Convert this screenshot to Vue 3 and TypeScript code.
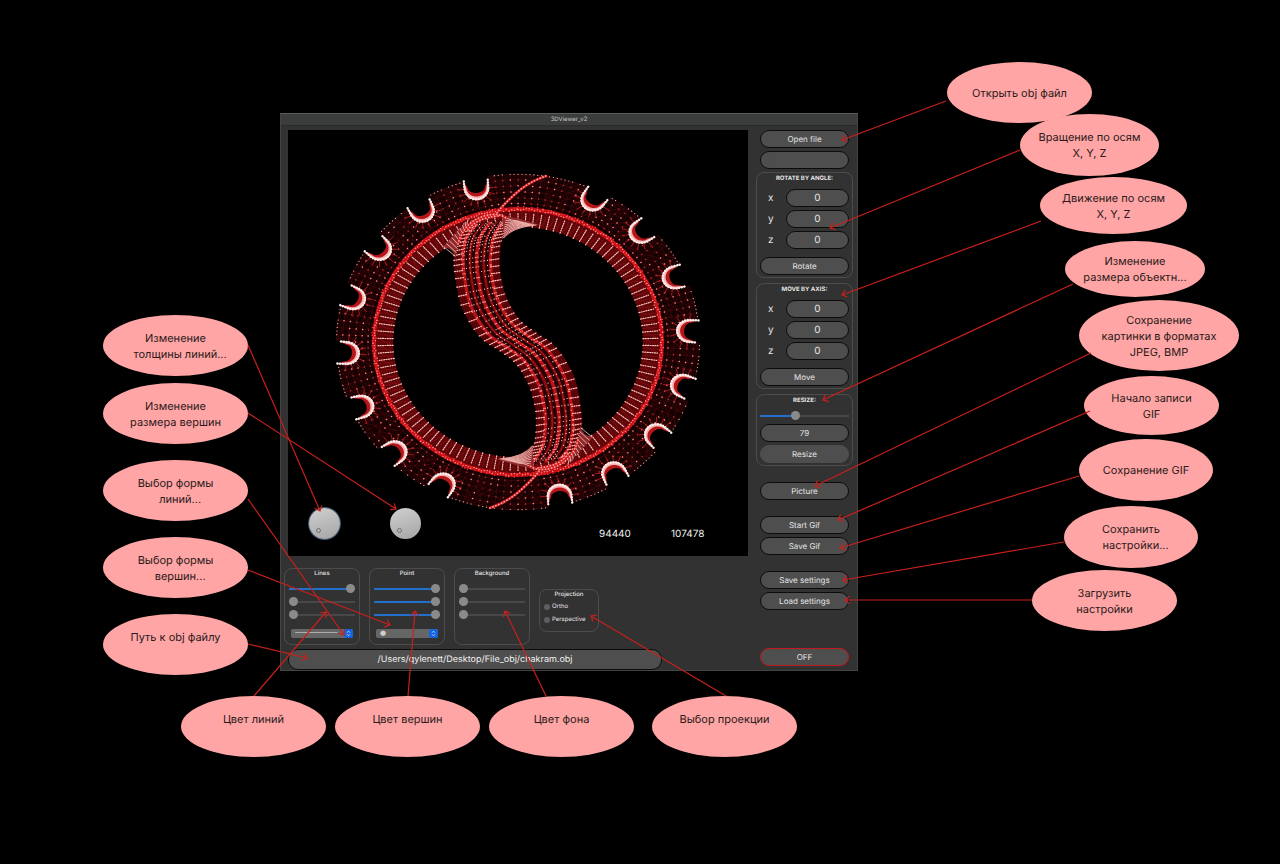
<script setup lang="ts">
import { ref } from 'vue'

interface Bubble {
  x: number
  y: number
  w: number
  h: number
  lines: string[]
  upper?: boolean
}

const bubbles: Bubble[] = [
  { x: 947, y: 62, w: 145, h: 61, lines: ['Открыть obj файл'] },
  { x: 1020, y: 114, w: 139, h: 62, lines: ['Вращение по осям', 'X, Y, Z'] },
  { x: 1040, y: 177, w: 147, h: 57, lines: ['Движение по осям', 'X, Y, Z'] },
  { x: 1065, y: 241, w: 140, h: 56, lines: ['Изменение', 'размера объектн...'] },
  { x: 1079, y: 300, w: 160, h: 71, lines: ['Сохранение', 'картинки в форматах', 'JPEG, BMP'] },
  { x: 1084, y: 376, w: 135, h: 59, lines: ['Начало записи', 'GIF'] },
  { x: 1079, y: 439, w: 134, h: 62, lines: ['Сохранение GIF'] },
  { x: 1064, y: 506, w: 134, h: 62, lines: ['Сохранить', '\u00a0\u00a0\u00a0настройки...'] },
  { x: 1032, y: 570, w: 145, h: 61, lines: ['Загрузить', 'настройки'] },
  { x: 103, y: 315, w: 145, h: 61, lines: ['Изменение', '\u00a0\u00a0\u00a0толщины линий...'] },
  { x: 103, y: 383, w: 145, h: 61, lines: ['Изменение', 'размера вершин'] },
  { x: 103, y: 460, w: 145, h: 61, lines: ['Выбор формы', '\u00a0\u00a0\u00a0линий...'] },
  { x: 103, y: 537, w: 145, h: 61, lines: ['Выбор формы', '\u00a0\u00a0\u00a0вершин...'] },
  { x: 103, y: 614, w: 145, h: 61, lines: ['Путь к obj файлу'], upper: true },
  { x: 181, y: 696, w: 145, h: 61, lines: ['Цвет линий'], upper: true },
  { x: 335, y: 696, w: 145, h: 61, lines: ['Цвет вершин'], upper: true },
  { x: 489, y: 696, w: 145, h: 61, lines: ['Цвет фона'], upper: true },
  { x: 652, y: 696, w: 145, h: 61, lines: ['Выбор проекции'], upper: true },
]

const links: number[][] = [
  [946, 101, 842, 140],
  [1020, 150, 830, 228],
  [1041, 221, 842, 295],
  [1073, 284, 823, 400],
  [1091, 353, 815, 486],
  [1090, 411, 838, 520],
  [1079, 476, 840, 548],
  [1064, 542, 843, 580],
  [1032, 600, 845, 600],
  [248, 345, 320, 511],
  [248, 413, 396, 509],
  [248, 499, 344, 635],
  [248, 570, 390, 625],
  [248, 644, 307, 658],
  [254, 696, 326, 612],
  [408, 696, 415, 611],
  [546, 696, 505, 611],
  [726, 696, 591, 616],
]

function arrow([x1, y1, x2, y2]: number[]): string {
  const a = Math.atan2(y2 - y1, x2 - x1)
  const tip = (d: number) =>
    `${(x2 - 6 * Math.cos(a + d)).toFixed(1)} ${(y2 - 6 * Math.sin(a + d)).toFixed(1)}`
  return `M${x1} ${y1}L${x2} ${y2}M${tip(0.7)}L${x2} ${y2}L${tip(-0.7)}`
}

/* ---- wireframe model, drawn around the origin ---- */
type Pt = [number, number]
const FLAT = 0.924
const f = (n: number) => n.toFixed(1)
const polar = (r: number, deg: number): Pt => {
  const a = (deg * Math.PI) / 180
  return [r * Math.sin(a), -r * Math.cos(a) * FLAT]
}
const P = (p: Pt) => `${f(p[0])} ${f(p[1])}`
const dot = (p: Pt) => `M${P(p)}h.1`

let seed = 7
const rnd = () => {
  seed = (seed * 16807) % 2147483647
  return seed / 2147483647
}

const notchAngles: number[] = []
for (let i = 0; i < 8; i++) notchAngles.push(-14 - i * 20, 166 - i * 20)

let mesh = ''
let meshDots = ''
let brightDots = ''
let edgeDots = ''
const step = 2.5
const rings = [150, 156, 162.5, 169, 175.5, 181.5]
for (let d = 0; d < 360; d += step) {
  mesh += `M${P(polar(146, d))}L${P(polar(181.5, d))}`
  rings.forEach((r, i) => {
    const p = polar(r, d)
    mesh += `M${P(p)}L${P(polar(r, d + step))}`
    const next = rings[i + 1]
    if (next) {
      mesh += rnd() > 0.4 ? `M${P(p)}L${P(polar(next, d + step))}` : `M${P(p)}L${P(polar(next, d - step))}`
    }
    if (i < 5) {
      const k = rnd()
      if (k > 0.55) brightDots += dot(p)
      else if (k > 0.15) meshDots += dot(p)
    }
    if (i === 5) {
      edgeDots += dot(p)
      if (rnd() > 0.4) edgeDots += dot(polar(r, d + step / 2))
    }
  })
}

let rim = ''
let rimFine = ''
for (let d = 0; d < 360; d += 1.1) {
  rim += dot(polar(143.6 + (rnd() - 0.5) * 3.6, d))
  rimFine += dot(polar(144 + (rnd() - 0.5) * 5.5, d))
}

let spokes = ''
let spokeMesh = ''
for (let i = 0; i < 110; i++) {
  const d = (i * 360) / 110
  spokes += `M${P(polar(125, d))}L${P(polar(140, d))}`
  spokeMesh += `M${P(polar(125, d))}L${P(polar(141, d + 3.3))}M${P(polar(125, d + 1.6))}L${P(polar(141, d + 1.6))}`
}

function ring(r: number): string {
  return `M${-r} 0A${r} ${r * FLAT} 0 1 1 ${r} 0A${r} ${r * FLAT} 0 1 1 ${-r} 0Z`
}

/* notch shapes in a local frame: x across, y along the outward radius, leaning clockwise */
function notch(deg: number) {
  const a = (deg * Math.PI) / 180
  const lean = 0.16
  const m = (lx: number, ly: number): Pt => {
    const x = lx * Math.cos(lean) + (ly - 172) * Math.sin(lean)
    const y = 172 - lx * Math.sin(lean) + (ly - 172) * Math.cos(lean)
    return [x * Math.cos(a) + y * Math.sin(a), (x * Math.sin(a) - y * Math.cos(a)) * FLAT]
  }
  const arc = (hw: number, depth: number, c: number, top: number, tipHw: number): Pt[] => {
    const out: Pt[] = [m(-tipHw, top)]
    for (let t = 0; t <= 18; t++) {
      const g = Math.PI + (t / 18) * Math.PI
      out.push(m(hw * Math.cos(g), c + depth * Math.sin(g)))
    }
    out.push(m(tipHw, top))
    return out
  }
  const path = (pts: Pt[]) => 'M' + pts.map(P).join('L')
  let burst = ''
  for (let t = 0; t <= 8; t++) {
    const g = Math.PI + (t / 8) * Math.PI
    burst += `M${P(m(12 * Math.cos(g), 171 + 12 * Math.sin(g)))}L${P(m(19 * Math.cos(g), 171 + 19 * Math.sin(g)))}`
  }
  return {
    hole: path(arc(11, 11, 172, 190, 13)) + 'Z',
    red: path(arc(10.5, 10.5, 172, 178, 11)) + 'L' + arc(8.5, 5.5, 172, 178, 11).reverse().map(P).join('L') + 'Z',
    crescent: path(arc(12.5, 13.5, 172, 180, 12.5)) + 'L' + arc(10, 9.5, 172, 180, 12).reverse().map(P).join('L') + 'Z',
    dots: path(arc(12, 12.5, 172, 180, 12)),
    burst,
  }
}
const notches = notchAngles.map(notch)

/* S-shaped bar: left edge samples, right edge is its point reflection */
const left: Pt[] = [
  [-51, -116], [-61, -103], [-64, -88], [-63, -67], [-56, -34], [-38, -5], [-18, 9],
  [-1, 23], [12, 46], [18, 73], [17, 98], [12, 112], [5, 122],
]
const right: Pt[] = left.map(([x, y]): Pt => [-x, -y]).reverse()
function along(pts: Pt[], t: number): Pt {
  const s = Math.min(t, 0.9999) * (pts.length - 1)
  const i = Math.floor(s)
  const u = s - i
  const g = (k: number) => pts[Math.max(0, Math.min(pts.length - 1, k))]
  const c = (k: 0 | 1) => {
    const [a, b, d, e] = [g(i - 1)[k], g(i)[k], g(i + 1)[k], g(i + 2)[k]]
    return 0.5 * (2 * b + (d - a) * u + (2 * a - 5 * b + 4 * d - e) * u * u + (3 * b - a - 3 * d + e) * u * u * u)
  }
  return [c(0), c(1)]
}
function bar(w: number, t: number): Pt {
  const a = along(left, t)
  const b = along(right, t)
  return [a[0] + (b[0] - a[0]) * w, a[1] + (b[1] - a[1]) * w]
}
function strand(w: number): string {
  let s = ''
  for (let i = 0; i <= 80; i++) s += (i ? 'L' : 'M') + P(bar(w, i / 80))
  return s
}
let barFill = ''
for (let i = 0; i <= 60; i++) barFill += (i ? 'L' : 'M') + P(bar(0, i / 60))
for (let i = 60; i >= 0; i--) barFill += 'L' + P(bar(1, i / 60))
barFill += 'Z'
const darkStrands = [0.28, 0.42, 0.58, 0.72].map(strand).join('')
const redStrands = [0.2, 0.5, 0.8].map(strand).join('')
const fineStrands = [0.35, 0.65].map(strand).join('')
let cross = ''
let barMesh = ''
let barDots = ''
let paleDots = ''
for (let i = 1; i < 46; i++) {
  const t = i / 46
  cross += `M${P(bar(0, t))}L${P(bar(0.2, t))}M${P(bar(0.8, t))}L${P(bar(1, t))}`
  barMesh += `M${P(bar(0, t))}L${P(bar(1, t))}M${P(bar(0, t))}L${P(bar(0.5, t + 0.02))}L${P(bar(1, t))}`
}
for (let i = 0; i < 60; i++) {
  const t = i / 60
  for (const w of [0.18, 0.22, 0.47, 0.53, 0.78, 0.82]) {
    if (rnd() > 0.2) barDots += dot(bar(w + (rnd() - 0.5) * 0.02, t))
  }
  for (const w of [0.27, 0.34, 0.41, 0.5, 0.59, 0.66, 0.73]) {
    if (rnd() > 0.3) paleDots += dot(bar(w, t))
  }
}

/* fillets where the bar meets the ring */
let webLines = ''
for (let i = 0; i <= 9; i++) {
  const k = i / 9
  webLines += `M${f(-74 + k * 24)} ${f(-95 - k * 28)}L${f(-63 + k * 12)} ${f(-86 - k * 32)}`
  webLines += `M${f(-15 + k * 3)} ${f(-104 - k * 20)}Q${f(-6)} ${f(-115 - k * 6)} ${f(18 - k * 18)} ${f(-117 - k * 4)}`
}
const webFill = 'M-76 -94L-48 -124L-53 -112Q-62 -100 -62 -84Q-66 -96 -76 -94ZM-14 -103L-16 -127L2 -123L22 -117Q-4 -116 -14 -103Z'
const seam = 'M28 -166Q10 -160 -4 -147T-21 -129'
const crown = 'M-60 -98Q-54 -120 -34 -126Q-20 -130 -12 -124M-50 -112Q-42 -124 -20 -126'

/* ---- control state ---- */
const rotate = ref({ x: 0, y: 0, z: 0 })
const move = ref({ x: 0, y: 0, z: 0 })
const axes = ['x', 'y', 'z'] as const
const scale = ref(79)
const zoomPos = ref(39)
const info = ref('')
const file = ref('/Users/qylenett/Desktop/File_obj/chakram.obj')
const projection = ref('')
const colours = ref([
  { name: 'Lines', values: [100, 0, 0], glyph: '──────────' },
  { name: 'Point', values: [100, 100, 100], glyph: '●' },
  { name: 'Background', values: [0, 0, 0], glyph: '' },
])
const lineWidth = ref(25)
const pointSize = ref(25)
</script>

<template>
  <main class="board">
    <div v-for="(b, i) in bubbles" :key="i" class="bubble" :class="{ upper: b.upper }"
      :style="{ left: b.x + 'px', top: b.y + 'px', width: b.w + 'px', height: b.h + 'px' }">
      <span v-for="l in b.lines" :key="l">{{ l }}</span>
    </div>

    <section class="window">
      <header class="titlebar">3DViewer_v2</header>
      <div class="body">
        <div class="main">
          <div class="viewport">
            <svg class="model" viewBox="-230 -212 460 426" aria-hidden="true">
              <path :d="ring(181.5) + ring(146)" fill="#150102" fill-rule="evenodd" />
              <path :d="mesh" class="mesh" />
              <path :d="meshDots" class="mesh-dots" />
              <path :d="brightDots" class="bright-dots" />
              <path :d="edgeDots" class="edge-dots" />
              <path :d="ring(142) + ring(125)" fill="#5c0508" fill-rule="evenodd" />
              <path :d="spokeMesh" class="spoke-mesh" />
              <path :d="spokes" class="spokes" />
              <path :d="ring(144)" class="rim" />
              <path :d="rimFine" class="rim-fine" />
              <path :d="rim" class="rim-dots" />
              <g v-for="(n, i) in notches" :key="i">
                <path :d="n.hole" fill="#000" />
                <path :d="n.burst" class="burst" />
                <path :d="n.red" fill="#b4161a" />
                <path :d="n.crescent" fill="#f9b3b0" />
                <path :d="n.dots" class="notch-dots" />
              </g>
              <path :d="barFill" fill="#560407" />
              <path :d="barMesh" class="spoke-mesh" />
              <path :d="darkStrands" class="dark-strands" />
              <path :d="redStrands" class="red-strands" />
              <path :d="fineStrands" class="fine-strands" />
              <path :d="cross" class="spokes" />
              <path :d="paleDots" class="pale-dots" />
              <path :d="barDots" class="bar-dots" />
              <g v-for="turn in [0, 180]" :key="turn" :transform="`rotate(${turn})`">
                <path :d="webFill" fill="#8e2a2c" />
                <path :d="webLines" class="web" />
                <path :d="crown" class="seam" />
                <path :d="crown" class="seam-dots" />
                <path :d="seam" class="seam" />
                <path :d="seam" class="seam-dots" />
              </g>
            </svg>
            <div class="overlay">
              <input v-model="lineWidth" class="dial focused" type="range" aria-label="Line width" />
              <input v-model="pointSize" class="dial" type="range" aria-label="Point size" />
              <output class="count">94440</output>
              <output class="count last">107478</output>
            </div>
          </div>

          <div class="panels">
            <section v-for="c in colours" :key="c.name" class="panel">
              <h2>{{ c.name }}</h2>
              <input v-for="(v, i) in c.values" :key="i" v-model.number="c.values[i]" class="slider" type="range"
                :style="{ '--fill': v + '%' }" :aria-label="`${c.name} ${i + 1}`" />
              <div v-if="c.glyph" class="pick">
                <select :aria-label="`${c.name} style`"><option>{{ c.glyph }}</option></select>
                <svg viewBox="0 0 9 9" aria-hidden="true">
                  <rect width="9" height="9" rx="2" fill="#1464e0" />
                  <path d="M3 3.7L4.500 2.200L6 3.700M3 5.300L4.500 6.800L6 5.300" fill="none" stroke="#dfeaff" stroke-width=".8" />
                </svg>
              </div>
            </section>
            <section class="panel projection">
              <h2>Projection</h2>
              <label><input v-model="projection" type="radio" value="ortho" />Ortho</label>
              <label><input v-model="projection" type="radio" value="perspective" />Perspective</label>
            </section>
          </div>

          <input v-model="file" class="field path" type="text" aria-label="File path" />
        </div>

        <aside class="side">
          <button class="btn">Open file</button>
          <input v-model="info" class="field" type="text" aria-label="File" />
          <section class="group">
            <h2>ROTATE BY ANGLE:</h2>
            <label v-for="a in axes" :key="a"><span>{{ a }}</span><input v-model="rotate[a]" class="field" type="text" /></label>
            <button class="btn apply">Rotate</button>
          </section>
          <section class="group">
            <h2>MOVE BY AXIS:</h2>
            <label v-for="a in axes" :key="a"><span>{{ a }}</span><input v-model="move[a]" class="field" type="text" /></label>
            <button class="btn apply">Move</button>
          </section>
          <section class="group resize">
            <h2>RESIZE:</h2>
            <input v-model.number="zoomPos" class="slider" type="range" :style="{ '--fill': zoomPos + '%' }" aria-label="Scale" />
            <input v-model="scale" class="field small" type="text" aria-label="Scale value" />
            <button class="btn plain">Resize</button>
          </section>
          <div class="stack"><button class="btn">Picture</button></div>
          <div class="stack">
            <button class="btn">Start Gif</button>
            <button class="btn">Save Gif</button>
          </div>
          <div class="stack">
            <button class="btn">Save settings</button>
            <button class="btn">Load settings</button>
          </div>
          <button class="btn off">OFF</button>
        </aside>
      </div>
    </section>

    <svg class="links" aria-hidden="true">
      <path v-for="(l, i) in links" :key="i" :d="arrow(l)" />
    </svg>
  </main>
</template>

<style>
body {
  background: #000;
}
</style>

<style scoped>
.board {
  position: relative;
  min-height: 100vh;
  background: #000;
  overflow: hidden;
  font-family: Inter, "Noto Sans", sans-serif;
  text-rendering: geometricPrecision;
}
.board *,
.board {
  box-sizing: border-box;
}
.bubble {
  position: absolute;
  display: flex;
  flex-direction: column;
  align-items: center;
  justify-content: center;
  border-radius: 50%;
  background: #ffa5a5;
  color: #2b1a1a;
  font-size: 11px;
  line-height: 16px;
  white-space: nowrap;
}
.bubble.upper {
  padding-bottom: 16px;
}
.links {
  position: absolute;
  inset: 0;
  width: 100%;
  height: 100%;
  pointer-events: none;
  fill: none;
  stroke: #c8201c;
  stroke-width: 1.2;
}

.window {
  position: absolute;
  left: 280px;
  top: 113px;
  width: 578px;
  background: #323232;
  border: 1px solid #444;
  border-top-color: #5a5d5c;
  color: #e4e4e4;
}
.titlebar {
  height: 12px;
  background: #3a3d3c;
  border-bottom: 1px solid #2b2b2b;
  font-size: 6px;
  line-height: 11px;
  text-align: center;
  color: #c4c4c4;
}
.body {
  display: flex;
  justify-content: space-between;
  padding: 4px 4px 0 3px;
}
.main {
  display: flex;
  flex-direction: column;
  width: 464px;
}
.viewport {
  display: grid;
  margin-left: 4px;
  background: #000;
}
.model,
.overlay {
  grid-area: 1 / 1;
}
.model {
  display: block;
  width: 100%;
  fill: none;
  stroke-linecap: round;
}
.mesh { stroke: #4c090c; stroke-width: .6; }
.mesh-dots { stroke: #c03a38; stroke-width: 1.3; }
.bright-dots { stroke: #ff8f86; stroke-width: 1.5; }
.edge-dots { stroke: #e0a8a2; stroke-width: 1.2; }
.spoke-mesh { stroke: #8c0f12; stroke-width: .6; }
.spokes { stroke: #ffc4bd; stroke-width: 1.2; stroke-dasharray: 1 1.4; }
.rim { stroke: #c81218; stroke-width: 4; }
.rim-fine { stroke: #ff2b2b; stroke-width: 1.6; }
.rim-dots { stroke: #ff9a92; stroke-width: 1.3; }
.burst { stroke: #a5171a; stroke-width: 1; }
.notch-dots { stroke: #fff0ee; stroke-width: 2.4; stroke-dasharray: .1 2.6; }
.dark-strands { stroke: #240204; stroke-width: 3; }
.red-strands { stroke: #bd1217; stroke-width: 3; }
.fine-strands { stroke: #9c1014; stroke-width: 1.6; }
.bar-dots { stroke: #ff8f88; stroke-width: 1.4; }
.pale-dots { stroke: #ffcfc8; stroke-width: 1.2; }
.web { stroke: #ffc9c4; stroke-width: .8; }
.seam { stroke: #d92024; stroke-width: 2.6; }
.seam-dots { stroke: #ffb0aa; stroke-width: 1.6; stroke-dasharray: .1 3; }

.overlay {
  display: flex;
  align-items: center;
  align-self: end;
  padding: 0 0 16px 21px;
}
.dial {
  appearance: none;
  width: 31px;
  height: 31px;
  margin: 0 50px 0 0;
  border-radius: 50%;
  background: linear-gradient(160deg, #d0d0d0, #a4a4a4);
}
.dial.focused {
  box-shadow: 0 0 0 1px #3f5878;
}
.dial::-webkit-slider-runnable-track {
  height: 31px;
}
.dial::-webkit-slider-thumb {
  appearance: none;
  width: 5px;
  height: 5px;
  margin-top: 20px;
  border: 1px solid #707070;
  border-radius: 50%;
}
.count {
  width: 32px;
  margin: 22px 0 0 128px;
  font-size: 10px;
  line-height: 12px;
  color: #f2f2f2;
}
.count.last {
  margin-left: 40px;
}

.panels {
  display: flex;
  gap: 9px;
  margin: 12px 0 4px;
}
.panel {
  display: flex;
  flex-direction: column;
  width: 76px;
  height: 77px;
  padding: 0 4px;
  border: 1px solid #4c4c4c;
  border-radius: 8px;
}
h2 {
  margin: 0;
  font-size: 6px;
  line-height: 8px;
  font-weight: 500;
  text-align: center;
}
.panel h2 {
  margin: 1px 0 6px;
}
.slider {
  appearance: none;
  flex: none;
  width: 100%;
  height: 10px;
  margin: 0 0 3px;
  background: transparent;
}
.slider::-webkit-slider-runnable-track {
  height: 2px;
  background: linear-gradient(90deg, #2270cc var(--fill), #484848 var(--fill));
}
.slider::-webkit-slider-thumb {
  appearance: none;
  width: 9px;
  height: 9px;
  margin-top: -4px;
  border-radius: 50%;
  background: #8a8a8a;
}
.pick {
  position: relative;
  display: flex;
  margin: 6px 2px 0;
}
.pick select {
  appearance: none;
  width: 100%;
  height: 9px;
  padding: 0 4px;
  border: 0;
  border-radius: 2px;
  background: #666;
  color: #d0d0d0;
  font: 7px/9px "DejaVu Sans", sans-serif;
}
.pick svg {
  position: absolute;
  right: 0;
  top: 0;
  width: 9px;
  height: 9px;
  pointer-events: none;
}
.projection {
  align-self: flex-end;
  width: 60px;
  height: 43px;
  margin-bottom: 13px;
}
.projection h2 {
  margin-bottom: 1px;
}
.projection label {
  display: flex;
  align-items: center;
  gap: 2px;
  height: 13px;
  font-size: 6px;
}
.projection input {
  appearance: none;
  width: 6px;
  height: 6px;
  margin: 0;
  border-radius: 50%;
  background: #5e5e5e;
}
.projection input:checked {
  background: #2270cc;
}

.btn,
.field {
  display: block;
  width: 100%;
  height: 18px;
  margin: 0;
  padding: 0;
  border: 1px solid #0c0c0c;
  border-radius: 9px;
  background: #4e4e4e;
  color: #e4e4e4;
  font-family: inherit;
  font-size: 8px;
  line-height: 16px;
  text-align: center;
  text-rendering: inherit;
}
.field {
  font-size: 10px;
}
.field.small {
  font-size: 8px;
}
.path {
  width: 374px;
  height: 21px;
  margin-left: 4px;
  border-radius: 10px;
  color: #f2f2f2;
  font-size: 9px;
}
.btn.plain {
  border-color: #4e4e4e;
}
.btn.off {
  border-color: #c0181c;
  margin: auto 0 4px;
}
.side {
  display: flex;
  flex-direction: column;
  gap: 3px;
  width: 97px;
  padding: 0 4px;
}
.group {
  margin: 0 -4px 2px;
  padding: 2px 3px;
  border: 1px solid #4c4c4c;
  border-radius: 8px;
}
.group h2 {
  margin-bottom: 6px;
  font-weight: 700;
}
.group label {
  display: flex;
  align-items: center;
  margin-bottom: 3px;
  font-size: 10px;
}
.group label span {
  width: 26px;
  padding-left: 8px;
  line-height: 14px;
  flex: none;
}
.group .field {
  min-width: 0;
}
.apply {
  margin-top: 8px;
}
.resize .slider {
  display: block;
}
.resize .field {
  margin-bottom: 3px;
}
.stack {
  display: flex;
  flex-direction: column;
  gap: 3px;
  margin-top: 13px;
}
.resize + .stack {
  margin-top: 11px;
}
</style>
